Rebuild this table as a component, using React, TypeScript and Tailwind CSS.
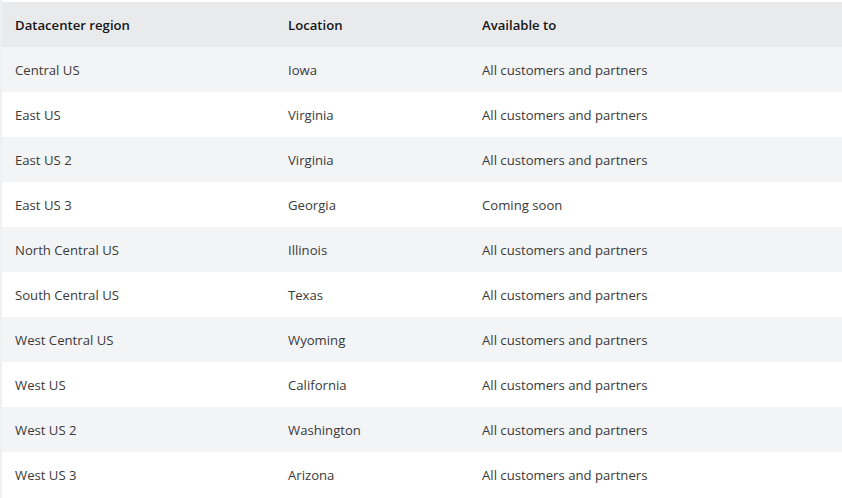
const rows = [
  ["Central US", "Iowa", "All customers and partners"],
  ["East US", "Virginia", "All customers and partners"],
  ["East US 2", "Virginia", "All customers and partners"],
  ["East US 3", "Georgia", "Coming soon"],
  ["North Central US", "Illinois", "All customers and partners"],
  ["South Central US", "Texas", "All customers and partners"],
  ["West Central US", "Wyoming", "All customers and partners"],
  ["West US", "California", "All customers and partners"],
  ["West US 2", "Washington", "All customers and partners"],
  ["West US 3", "Arizona", "All customers and partners"],
];

export default function App() {
  return (
    <div
      className="w-[842px] h-[498px] bg-white pt-[2px] overflow-hidden border-l-[2px] border-[#f0f0f0]"
      style={{ fontFamily: '"Segoe UI", "Open Sans", "Noto Sans", sans-serif' }}
    >
      <table className="w-full border-collapse text-[13.15px] text-left">
        <colgroup>
          <col className="w-[274px]" />
          <col className="w-[194px]" />
          <col />
        </colgroup>
        <thead>
          <tr className="h-[45px] bg-[#e9eaec] text-[#161616]">
            <th className="pl-[13px] pt-[2px] font-semibold">Datacenter region</th>
            <th className="pl-[12px] pt-[2px] font-semibold">Location</th>
            <th className="pl-[12px] pt-[2px] font-semibold">Available to</th>
          </tr>
        </thead>
        <tbody>
          {rows.map((r, i) => (
            <tr
              key={r[0]}
              className={"h-[45px] text-[#3a3a3a] " + (i % 2 === 0 ? "bg-[#f3f4f6]" : "bg-white")}
            >
              <td className="pl-[13px] pt-[3px]">{r[0]}</td>
              <td className="pl-[12px] pt-[3px]">{r[1]}</td>
              <td className="pl-[12px] pt-[3px]">{r[2]}</td>
            </tr>
          ))}
        </tbody>
      </table>
    </div>
  );
}
